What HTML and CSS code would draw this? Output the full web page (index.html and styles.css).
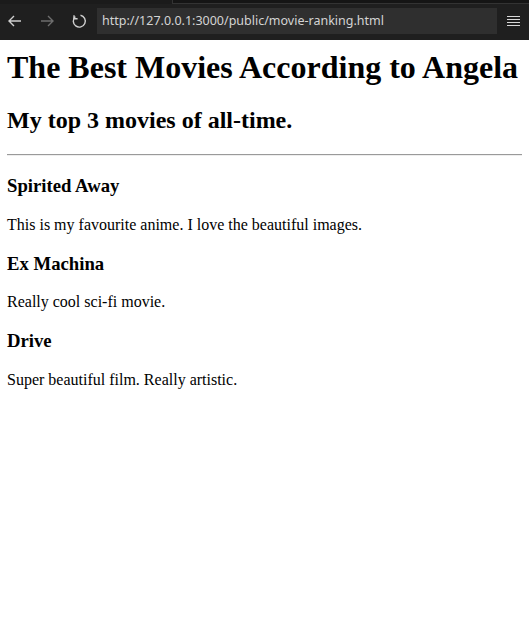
FILE: index.html
```html
<!DOCTYPE html>
<html>
<head>
<meta charset="utf-8">
<title>Movie Ranking</title>
<link rel="stylesheet" href="styles.css">
</head>
<body>
<div class="chrome">
  <div class="topstrip"><div class="tabedge"></div></div>
  <div class="toolbar">
    <span class="navbtn">
      <svg width="16" height="16" viewBox="0 0 16 16"><path d="M14 8H2M7 3L2 8l5 5" fill="none" stroke="#cfcfcf" stroke-width="1.4"/></svg>
    </span>
    <span class="navbtn">
      <svg width="16" height="16" viewBox="0 0 16 16"><path d="M2 8h12M9 3l5 5-5 5" fill="none" stroke="#6e6e6e" stroke-width="1.4"/></svg>
    </span>
    <span class="navbtn">
      <svg width="16" height="16" viewBox="0 0 16 16"><path d="M4.3 3.6A6 6 0 1 0 9.5 2.2" fill="none" stroke="#cfcfcf" stroke-width="1.4"/><path d="M3 2.2v3.6h3.6" fill="none" stroke="#cfcfcf" stroke-width="1.4"/></svg>
    </span>
    <div class="urlbar">http://127.0.0.1:3000/public/movie-ranking.html</div>
    <span class="menu">
      <svg width="14" height="12" viewBox="0 0 14 12"><path d="M0 1.5h13M0 4.5h13M0 7.5h13M0 10.5h13" stroke="#d8d8d8" stroke-width="1"/></svg>
    </span>
  </div>
</div>
<main class="page">
  <h1>The Best Movies According to Angela</h1>
  <h2>My top 3 movies of all-time.</h2>
  <hr>
  <h3>Spirited Away</h3>
  <p>This is my favourite anime. I love the beautiful images.</p>
  <h3>Ex Machina</h3>
  <p>Really cool sci-fi movie.</p>
  <h3>Drive</h3>
  <p>Super beautiful film. Really artistic.</p>
</main>
</body>
</html>
```
FILE: styles.css
```css
html, body {
  margin: 0;
  padding: 0;
  background: #fff;
}
.chrome {
  background: #1f1f1f;
  height: 40px;
  position: relative;
}
.topstrip {
  height: 4px;
  background: #1b1b1b;
  position: relative;
}
.tabedge {
  margin-left: 172px;
  height: 3px;
  background: #151515;
  border-left: 1px solid #333;
  border-bottom: 1px solid #333;
}
.toolbar {
  display: flex;
  align-items: center;
  height: 26px;
  margin-top: 4px;
  padding-left: 7px;
}
.navbtn {
  width: 16px;
  height: 16px;
  display: flex;
  margin-right: 16px;
}
.navbtn:nth-child(3) {
  margin-right: 10px;
}
.urlbar {
  height: 26px;
  background: #2f2f2f;
  color: #d4d4d4;
  font-family: "Noto Sans", "Open Sans", sans-serif;
  font-size: 12.5px;
  line-height: 26px;
  padding-left: 5px;
  box-sizing: border-box;
  width: 400px;
}
.menu {
  display: flex;
  margin-left: 10px;
}
.page {
  font-family: "Liberation Serif", "Times New Roman", serif;
  color: #000;
  padding: 9px 7px 8px;
}
h1 {
  font-size: 32px;
  margin: 0 0 21.44px;
}
h2 {
  font-size: 24px;
  margin: 19.92px 0;
}
h3 {
  font-size: 18.72px;
  margin: 18.72px 0;
}
p {
  font-size: 16px;
  margin: 16px 0;
}
hr {
  margin: 8px 0;
  border: 0;
  border-top: 1px solid #9a9a9a;
  border-bottom: 1px solid #eeeeee;
  height: 0;
}
```
